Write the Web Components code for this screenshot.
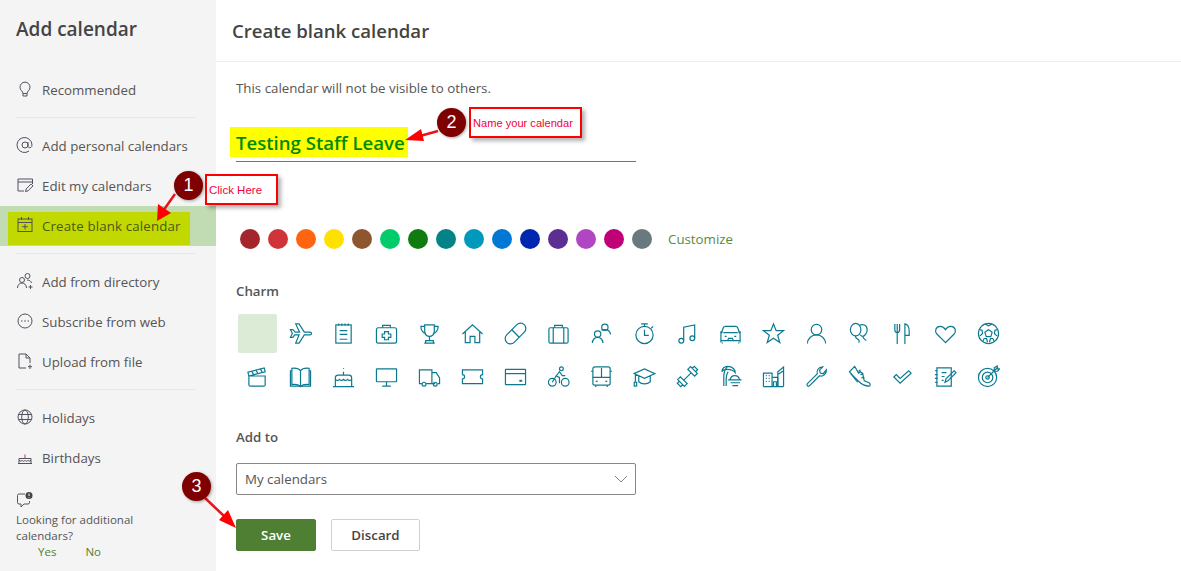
<!DOCTYPE html>
<html lang="en">
<head>
<meta charset="utf-8">
<title>Add calendar</title>
<style>
  html, body { margin: 0; background: #fff; overflow: hidden; }
  body { font-family: "Open Sans", "Noto Sans", sans-serif; color: #444; }
</style>
</head>
<body>
<calendar-app></calendar-app>

<script>
const NAV_ICONS = {
  bulb: `<path d="M5.600 10.800a5 5 0 1 1 6.800 0c-.9.9-1.200 1.500-1.300 2.700H6.900c-.1-1.200-.4-1.800-1.300-2.700z"/><path d="M7 13.500v2.500h4v-2.500"/>`,
  at: `<circle cx="9" cy="9" r="3"/><path d="M12 6v4c0 2.500 4 2.500 4-1a7.500 7.500 0 1 0-3 6"/>`,
  edit: `<path d="M8 15H2V3h14.500v5"/><path d="M2 6h14.500"/><path d="M9.500 15.500l.6-2.500 5-5 1.900 1.900-5 5z"/>`,
  add: `<rect x="2" y="3" width="14" height="12.500"/><path d="M2 6.500h14M5.500 1v3M12.500 1v3M9 8v5.500M6.200 10.700h5.600"/>`,
  people: `<circle cx="11.500" cy="4" r="2.500"/><circle cx="6" cy="8" r="2.500"/><path d="M1.500 16c0-3 2-5 4.500-5s4.500 2 4.500 5"/><path d="M11 8c2.500 0 4 1 4.500 3M14.500 13v4M12.500 15h4"/>`,
  web: `<circle cx="9" cy="9" r="7"/><path d="M5 9h1.500M8.200 9h1.600M11.500 9H13"/>`,
  upload: `<path d="M10 16H3V2h7l4 4v5"/><path d="M10 2v4h4M14 12.500V17M12 14.700h4"/>`,
  globe: `<circle cx="9" cy="9" r="7"/><ellipse cx="9" cy="9" rx="3.300" ry="7"/><path d="M2.500 6.500h13M2.500 11.500h13"/>`,
  cake: `<path d="M2 15.500h14M3 15.500V10.500h12v5"/><path d="M3 12c1.500 1.500 2.500 1.500 3 .4.500 1.100 2.500 1.100 3 0 .5 1.100 2.500 1.100 3 0 .5 1.100 1.500 1.100 3-.4"/><path d="M9 10.500V6.500" stroke="#b5413a"/>`
};

const CHARM_ICONS = [
  ``,
  `<path d="M1.500 8h2.500l2.500 2.500h4.500L7 2h3.500l5.500 8.500h5c1.500 0 2.500.7 2.500 1.500s-1 1.500-2.500 1.500h-5L10.500 22H7l3.500-8.500H6L4 16H1.500l2-4z"/>`,
  `<rect x="4" y="3" width="16" height="19"/><path d="M7 1.500V4M10.300 1.500V4M13.600 1.500V4M17 1.500V4M8 9h8M8 13h8M8 18h8"/>`,
  `<rect x="1.500" y="6" width="21" height="16" rx="2"/><path d="M8 6V3.500h8V6"/><path d="M10 10h4v2.500h2.500v3.500H14v2.500h-4V16H7.500v-3.500H10z"/>`,
  `<path d="M7 3h10v7a5 5 0 0 1-10 0z"/><path d="M7 4.500H3c0 4 1.500 6.500 5 7.500M17 4.500h4c0 4-1.500 6.500-5 7.500M12 15v4M8 22v-2.500h8V22M6.500 22h11"/>`,
  `<path d="M1.500 12.500L12 3l10.500 9.500M4.500 10.500V21.500H9.500V15h5v6.500h5V10.500"/>`,
  `<g transform="rotate(-45 12 12)"><rect x="-1" y="6.500" width="26" height="11" rx="5.500"/><path d="M12 6.500v11"/><path d="M14.500 10.500h.1M17 13.500h.1" stroke-width="1"/></g>`,
  `<rect x="2" y="6" width="20" height="16" rx="1.500"/><path d="M8 6V3.500h8V6M6.500 6v16M17.500 6v16"/>`,
  `<circle cx="15.500" cy="5.500" r="3.300"/><circle cx="8" cy="12.500" r="3.300"/><path d="M2.500 22c0-3.300 2.400-6 5.500-6s5.500 2.700 5.500 6M12 8.500c1-.6 2.300-.5 3.500-.5 3 0 5.500 2 6 5"/>`,
  `<circle cx="12" cy="13.500" r="9"/><path d="M8.500 2h7M12 2v2.500M12 8v6h4.500M19 6.500l2-2"/>`,
  `<circle cx="5.500" cy="19.500" r="2.500"/><circle cx="17" cy="17" r="2.500"/><path d="M8 19.500V5.500L19.500 3v14"/>`,
  `<path d="M2 21.500V12.500L4.500 6c.4-1 1.100-1.500 2-1.500h11c.9 0 1.600.5 2 1.500L22 12.500v9M2 19.500h20M1 10.500h3M20 10.500h3M4.500 11h15"/><path d="M3.500 21.500v1M20.500 21.500v1M6 15h2M16 15h2M9 19.500l1-2.500h4l1 2.500"/>`,
  `<path d="M12 2l2.800 7h7.700l-6.200 4.800 2.300 7.700-6.600-4.600-6.600 4.600 2.300-7.700L1.500 9h7.700z"/>`,
  `<circle cx="12" cy="8" r="5.500"/><path d="M2.500 22.500c0-5 4.200-9 9.500-9s9.500 4 9.500 9"/>`,
  `<ellipse cx="8" cy="8" rx="5.500" ry="6.500"/><path d="M12 3.500c3-1.800 8-.5 8 4.500 0 3.500-2.500 6.500-4.500 7-1 0-2-.6-2.800-1.500"/><path d="M8 14.500c-1 2 2 3 3 4s1 2.500 0 3M15.500 15c0 2 2 3 3.500 4.500"/>`,
  `<path d="M4 2v6c0 2 1.300 3 2.500 3s2.500-1 2.500-3V2M6.500 2v21M14.500 23V2c3 .5 4.500 3 4.500 8v4h-4.500"/>`,
  `<path d="M12 21.500L3 12.500C.5 10 1.500 4.500 6.500 4.500c2.500 0 4.300 1.500 5.500 3.500 1.200-2 3-3.500 5.500-3.500 5 0 6 5.500 3.500 8z"/>`,
  `<circle cx="12" cy="12" r="10.500"/><path d="M12 8l3.800 2.800-1.400 4.400H9.600L8.200 10.800zM8.500 2l3.500 2 3.500-2M2.500 8l2.800.5.500 3.500-2.600 2.500M21.500 8l-2.800.5-.5 3.500 2.600 2.500M6 20l1.500-2.800h2.500l1 3.800M18 20l-1.500-2.800H14l-1 3.800"/>`,
  `<path d="M3 11.500h17v9a1.500 1.500 0 0 1-1.500 1.500h-14A1.500 1.500 0 0 1 3 20.500zM3 11.500L2 7.500l17-4.500 1 4z"/><path d="M6 6.500l2 3.500M10.500 5.500l2 3.500M15 4l2 3.500"/>`,
  `<path d="M12 6C10 3.500 6.500 3 3 3.500v17c3.500-.5 7 0 9 2 2-2 5.500-2.500 9-2v-17C17.500 3 14 3.500 12 6zM12 6v16.500"/><path d="M3 6H1.500v16H22.500V6H21"/>`,
  `<path d="M1 22.500h22M3.500 22.500V13.500c0-2 1.500-3 3-3h11c1.500 0 3 1 3 3v9"/><path d="M3.500 15c1.500 1.500 3 1.500 4.200 0 1.300 1.500 3.300 1.500 4.300 0 1 1.500 3 1.500 4.300 0 1.200 1.500 2.700 1.500 4.200 0M12 10.500V7M12 3v1"/>`,
  `<rect x="1.500" y="4" width="21" height="13.500" rx=".5"/><path d="M12 17.500v4M7.500 22h9"/>`,
  `<path d="M14.500 19.500V5H1.500v14.500H4M8.500 19.500h6M14.500 8h4.500l3.500 5.500v6h-2M18 19.500h-3.500"/><circle cx="6.300" cy="20" r="2"/><circle cx="18" cy="20" r="2"/>`,
  `<path d="M1.500 5h21v5a2 2 0 0 0 0 4.500v5h-21v-5a2 2 0 0 0 0-4.500z"/>`,
  `<rect x="1.500" y="4.500" width="21" height="16" rx=".5"/><path d="M1.500 9h21"/><path d="M16 16.500h3" stroke-width="2"/>`,
  `<circle cx="5.500" cy="18" r="4"/><circle cx="19" cy="18" r="4"/><circle cx="15" cy="4" r="2"/><path d="M5.500 18l4-6.500 3.500 1.500v6M9.500 11.500L13 7l3 4h3"/>`,
  `<rect x="3" y="2" width="18" height="19" rx="2"/><path d="M3 13h18M12 3v10M3 6.500H1M21 6.500h2M6 21v2M18 21v2M6 17h2M16 17h2"/>`,
  `<path d="M1 9l11-5 11 5-11 5zM6 11.500v6c3 3 9 3 12 0v-6M2.500 9.500v8"/><rect x="1.300" y="18" width="2.500" height="4"/>`,
  `<g transform="rotate(-45 12 12)"><path d="M7 12h10M-.5 9.500h3v5h-3zM2.500 7h4v10h-4zM17.500 7h4v10h-4zM21.500 9.500h3v5h-3z"/></g>`,
  `<path d="M5 22V12.500C5 7 7.500 3 9 1.500M9 1.500c-3 0-6 2-6 5.500 1-2.500 3.500-2.500 5.500-2.500C12 4.500 15 5 17 8c.5-3-3-6.500-8-6.500z"/><path d="M7.500 22V14c0-2 .5-4.500 2-7"/><path d="M11.500 15.500c.5-3 2.500-4.500 5-4.500s4.500 1.500 5 4.500M9.500 15.500h14M12 18.500h10M14 21.500h6"/>`,
  `<path d="M1.500 22.500V8.500h9v14M4 11h1M7 11h1M4 14h1M7 14h1M4 17h1M7 17h1M1.500 22.500h21M10.500 13h6v9.500M12 22.500v-5h3v5"/><path d="M16.500 22.500V7l6-5v20.500M16.500 10l6-4"/>`,
  `<path d="M2.500 19.500L12.800 9.200c-1-3.200 1-7.200 5.700-7.200l-3.300 3.300.8 3 3 .8L22.300 5c.5 4.500-3.700 7.500-7.200 6.200L4.800 21.500a1.500 1.500 0 0 1-2.300-2z"/>`,
  `<path d="M7 1.500L1.500 7l3 3.500 6.500 6.500c3 3 8 5 11 5 1.500 0 1.500-2.500 0-3.500l-5-2c-1-3-1-6-2-8L13 7l-2 1.500-4-7z"/><path d="M3 9l7 9M13 5l-2 2M16 9l-3 1M17 13l-3 .5"/>`,
  `<path d="M3 12.500l2.500-2.500 4 4L18.500 6 21 8.500 9.500 19z"/>`,
  `<path d="M3 3h15v19H3zM1 6h3M1 10h3M1 14h3M1 18h3M8 8h5M8 12h3M8 16h2"/><path d="M11.500 18l1-3.500L21 6l2 2-8.500 8.500z"/>`,
  `<circle cx="11" cy="13" r="9.500"/><circle cx="11" cy="13" r="5.500"/><circle cx="11" cy="13" r="1.800"/><path d="M11 13L22 2M18 3v3.500h3.500L23.500 4H21V1z"/>`
];

const SWATCHES = ["#a4262c", "#d13438", "#ff6410", "#ffe100", "#8e562e", "#00cc6a", "#107c10", "#038387",
  "#0099bc", "#0078d4", "#0027b0", "#5c2e91", "#b146c2", "#bf0077", "#69797e"];

class NavItem extends HTMLElement {
  constructor() {
    super();
    this.attachShadow({ mode: "open" });
  }

  connectedCallback() {
    const icon = NAV_ICONS[this.getAttribute("icon")];
    this.shadowRoot.innerHTML = `
      <style>
        :host { display: flex; align-items: center; height: 40px; padding-left: 16px; position: relative; font-size: 13.3px; color: #555; }
        :host([selected]) { background: #c1dbb3; color: #4b5a14; letter-spacing: 0.15px; }
        .marker { display: none; position: absolute; left: 8px; top: 6px; width: 182px; height: 33px; background: #c1d900; }
        :host([selected]) .marker { display: block; }
        svg { width: 18px; height: 18px; margin-top: -2px; fill: none; stroke: #54505e; stroke-width: 1; position: relative; flex: none; }
        span { margin-left: 8px; position: relative; white-space: nowrap; }
      </style>
      <div class="marker"></div>
      <svg viewBox="0 0 18 18">${icon}</svg>
      <span><slot></slot></span>
    `;
  }
}

class SidePanel extends HTMLElement {
  constructor() {
    super();
    this.attachShadow({ mode: "open" });
    this.shadowRoot.innerHTML = `
      <style>
        :host { display: block; width: 216px; flex: none; background: #f4f4f4; height: 571px; box-sizing: border-box; }
        h2 { margin: 0 0 27px 16px; padding-top: 15px; font-size: 19px; line-height: 28px; font-weight: 600; color: #444; }
        .line { height: 1px; margin: 7px 20px 8px 16px; background: #e8e8e8; }
        .ask { margin: 13px 0 0 16px; font-size: 11.5px; line-height: 16px; color: #555; }
        .ask svg { display: block; width: 18px; height: 18px; margin-bottom: 3px; fill: none; stroke: #555; }
        .ask div { width: 130px; }
        .ask p { margin: 0; padding-left: 22px; color: #4f7f32; display: flex; gap: 29px; }
      </style>
      <h2>Add calendar</h2>
      <nav-item icon="bulb">Recommended</nav-item>
      <div class="line"></div>
      <nav-item icon="at">Add personal calendars</nav-item>
      <nav-item icon="edit">Edit my calendars</nav-item>
      <nav-item icon="add" selected>Create blank calendar</nav-item>
      <div class="line"></div>
      <nav-item icon="people">Add from directory</nav-item>
      <nav-item icon="web">Subscribe from web</nav-item>
      <nav-item icon="upload">Upload from file</nav-item>
      <div class="line"></div>
      <nav-item icon="globe">Holidays</nav-item>
      <nav-item icon="cake">Birthdays</nav-item>
      <div class="ask">
        <svg viewBox="0 0 18 18"><path d="M9 3H3a1.500 1.500 0 0 0-1.500 1.500v7A1.500 1.500 0 0 0 3 13h2v3l3-3h4a1.500 1.500 0 0 0 1.500-1.500V10"/><circle cx="13" cy="4.500" r="3.500" fill="#444" stroke="none"/><path d="M13 2.500v2.500M13 6v.6" stroke="#fff"/></svg>
        <div>Looking for additional calendars?</div>
        <p><span>Yes</span><span>No</span></p>
      </div>
    `;
  }
}

class ColorPicker extends HTMLElement {
  constructor() {
    super();
    this.attachShadow({ mode: "open" });
    const dots = SWATCHES.map((c) => `<i style="background:${c}"></i>`).join("");
    this.shadowRoot.innerHTML = `
      <style>
        :host { display: flex; align-items: center; gap: 8px; height: 20px; padding-left: 4px; }
        i { display: block; width: 20px; height: 20px; border-radius: 50%; }
        span { margin-left: 8px; font-size: 13.3px; color: #5b8a3c; }
      </style>
      ${dots}<span>Customize</span>
    `;
  }
}

class CharmGrid extends HTMLElement {
  constructor() {
    super();
    this.attachShadow({ mode: "open" });
    const cells = CHARM_ICONS.map((icon, i) => i === 0
      ? `<div class="cell"><b></b></div>`
      : `<div class="cell"><svg viewBox="0 0 24 24">${icon}</svg></div>`).join("");
    this.shadowRoot.innerHTML = `
      <style>
        :host { display: grid; grid-template-columns: repeat(18, 43px); grid-auto-rows: 43px; }
        .cell { display: flex; align-items: center; justify-content: center; }
        b { display: block; width: 39px; height: 39px; border-radius: 2px; background: #dcebd6; }
        svg { width: 23px; height: 23px; fill: none; stroke: #0b7a90; stroke-width: 1.25; }
      </style>
      ${cells}
    `;
  }
}

class CalendarSelect extends HTMLElement {
  constructor() {
    super();
    this.attachShadow({ mode: "open" });
    this.shadowRoot.innerHTML = `
      <style>
        :host { display: flex; align-items: center; justify-content: space-between; box-sizing: border-box; width: 400px; height: 32px; padding: 0 7px 0 8px; border: 1px solid #8a8886; border-radius: 2px; font-size: 13.3px; color: #555; }
        svg { width: 14px; height: 8px; fill: none; stroke: #8a8886; }
      </style>
      <span><slot></slot></span>
      <svg viewBox="0 0 14 8"><path d="M1 1l6 6 6-6"/></svg>
    `;
  }
}

class ActionButton extends HTMLElement {
  constructor() {
    super();
    this.attachShadow({ mode: "open" });
    this.shadowRoot.innerHTML = `
      <style>
        :host { display: flex; align-items: center; justify-content: center; box-sizing: border-box; height: 32px; width: 89px; border: 1px solid #d0d0d0; border-radius: 2px; font-size: 13.3px; font-weight: 600; color: #444; background: #fff; }
        :host([primary]) { width: 80px; background: #4e7f32; border-color: #4e7f32; color: #fff; }
      </style>
      <slot></slot>
    `;
  }
}

class MainPanel extends HTMLElement {
  constructor() {
    super();
    this.attachShadow({ mode: "open" });
    this.shadowRoot.innerHTML = `
      <style>
        :host { display: block; flex: 1; min-width: 0; font-size: 13.3px; color: #555; }
        header { height: 44px; border-bottom: 1px solid #ececec; padding: 17px 0 0 16px; }
        h1 { margin: 0; font-size: 18.6px; line-height: 28px; font-weight: 600; color: #444; }
        .form { padding: 16px 0 0 20px; }
        p { margin: 0; line-height: 20px; }
        .name { width: 400px; margin-top: 29px; padding-bottom: 4px; border-bottom: 1px solid #5d7d85; }
        .name span { display: inline-block; margin-left: -6px; padding: 0 3px 0 6px; height: 30px; line-height: 32px; background: #ffff00; color: #008a00; font-size: 18.6px; font-weight: 600; vertical-align: top; }
        color-picker { margin-top: 67px; }
        h3 { margin: 0; font-size: 13.3px; line-height: 20px; font-weight: 600; color: #555; }
        .charm { margin-top: 32px; }
        charm-grid { margin-top: 11px; }
        .add { margin-top: 29px; }
        calendar-select { margin-top: 16px; }
        .buttons { display: flex; gap: 15px; margin-top: 24px; }
      </style>
      <header><h1>Create blank calendar</h1></header>
      <div class="form">
        <p>This calendar will not be visible to others.</p>
        <div class="name"><span>Testing Staff Leave</span></div>
        <color-picker></color-picker>
        <h3 class="charm">Charm</h3>
        <charm-grid></charm-grid>
        <h3 class="add">Add to</h3>
        <calendar-select>My calendars</calendar-select>
        <div class="buttons">
          <action-button primary>Save</action-button>
          <action-button>Discard</action-button>
        </div>
      </div>
    `;
  }
}

class StepBadge extends HTMLElement {
  constructor() {
    super();
    this.attachShadow({ mode: "open" });
  }

  connectedCallback() {
    this.shadowRoot.innerHTML = `
      <style>
        :host { position: absolute; left: ${this.getAttribute("x")}px; top: ${this.getAttribute("y")}px; width: 29px; height: 29px; display: flex; align-items: center; justify-content: center; border-radius: 50%; background: #7f0000; color: #fff; font: 18px "Liberation Sans", sans-serif; box-shadow: 1px 1px 3px rgba(0, 0, 0, 0.35); }
      </style>
      <slot></slot>
    `;
  }
}

class CalloutNote extends HTMLElement {
  constructor() {
    super();
    this.attachShadow({ mode: "open" });
  }

  connectedCallback() {
    const x = this.getAttribute("x");
    const y = this.getAttribute("y");
    const w = this.getAttribute("w");
    const size = this.getAttribute("size");
    this.shadowRoot.innerHTML = `
      <style>
        :host { position: absolute; left: ${x}px; top: ${y}px; width: ${w}px; height: 31px; box-sizing: border-box; display: flex; align-items: center; padding-left: 2px; border: 2px solid #f00; background: #fff; color: #f0003c; font: ${size}px "Liberation Sans", sans-serif; box-shadow: 3px 3px 4px rgba(0, 0, 0, 0.3); white-space: nowrap; }
      </style>
      <slot></slot>
    `;
  }
}

class MarkupLayer extends HTMLElement {
  constructor() {
    super();
    this.attachShadow({ mode: "open" });
    this.shadowRoot.innerHTML = `
      <style>
        :host { position: absolute; inset: 0; pointer-events: none; }
        svg { position: absolute; inset: 0; width: 1181px; height: 571px; }
        line { stroke: #e8141c; stroke-width: 2.5; }
        polygon { fill: #f00; }
      </style>
      <svg viewBox="0 0 1181 571">
        <line x1="175" y1="194" x2="163" y2="211"/>
        <polygon points="157,221 158,204 171,213"/>
        <line x1="438" y1="131" x2="420" y2="136"/>
        <polygon points="405,140 421,129 424,141"/>
        <line x1="205" y1="498" x2="224" y2="516"/>
        <polygon points="236,528 219,520 228,510"/>
      </svg>
      <step-badge x="174" y="171">1</step-badge>
      <step-badge x="437" y="108">2</step-badge>
      <step-badge x="182" y="472">3</step-badge>
      <callout-note x="205" y="174" w="73" size="11.5">Click Here</callout-note>
      <callout-note x="469" y="107" w="113" size="11.1">Name your calendar</callout-note>
    `;
  }
}

class CalendarApp extends HTMLElement {
  constructor() {
    super();
    this.attachShadow({ mode: "open" });
    this.shadowRoot.innerHTML = `
      <style>
        :host { display: flex; position: relative; width: 1181px; height: 571px; overflow: hidden; }
      </style>
      <side-panel></side-panel>
      <main-panel></main-panel>
      <markup-layer></markup-layer>
    `;
  }
}

customElements.define("nav-item", NavItem);
customElements.define("side-panel", SidePanel);
customElements.define("color-picker", ColorPicker);
customElements.define("charm-grid", CharmGrid);
customElements.define("calendar-select", CalendarSelect);
customElements.define("action-button", ActionButton);
customElements.define("main-panel", MainPanel);
customElements.define("step-badge", StepBadge);
customElements.define("callout-note", CalloutNote);
customElements.define("markup-layer", MarkupLayer);
customElements.define("calendar-app", CalendarApp);
</script>
</body>
</html>
